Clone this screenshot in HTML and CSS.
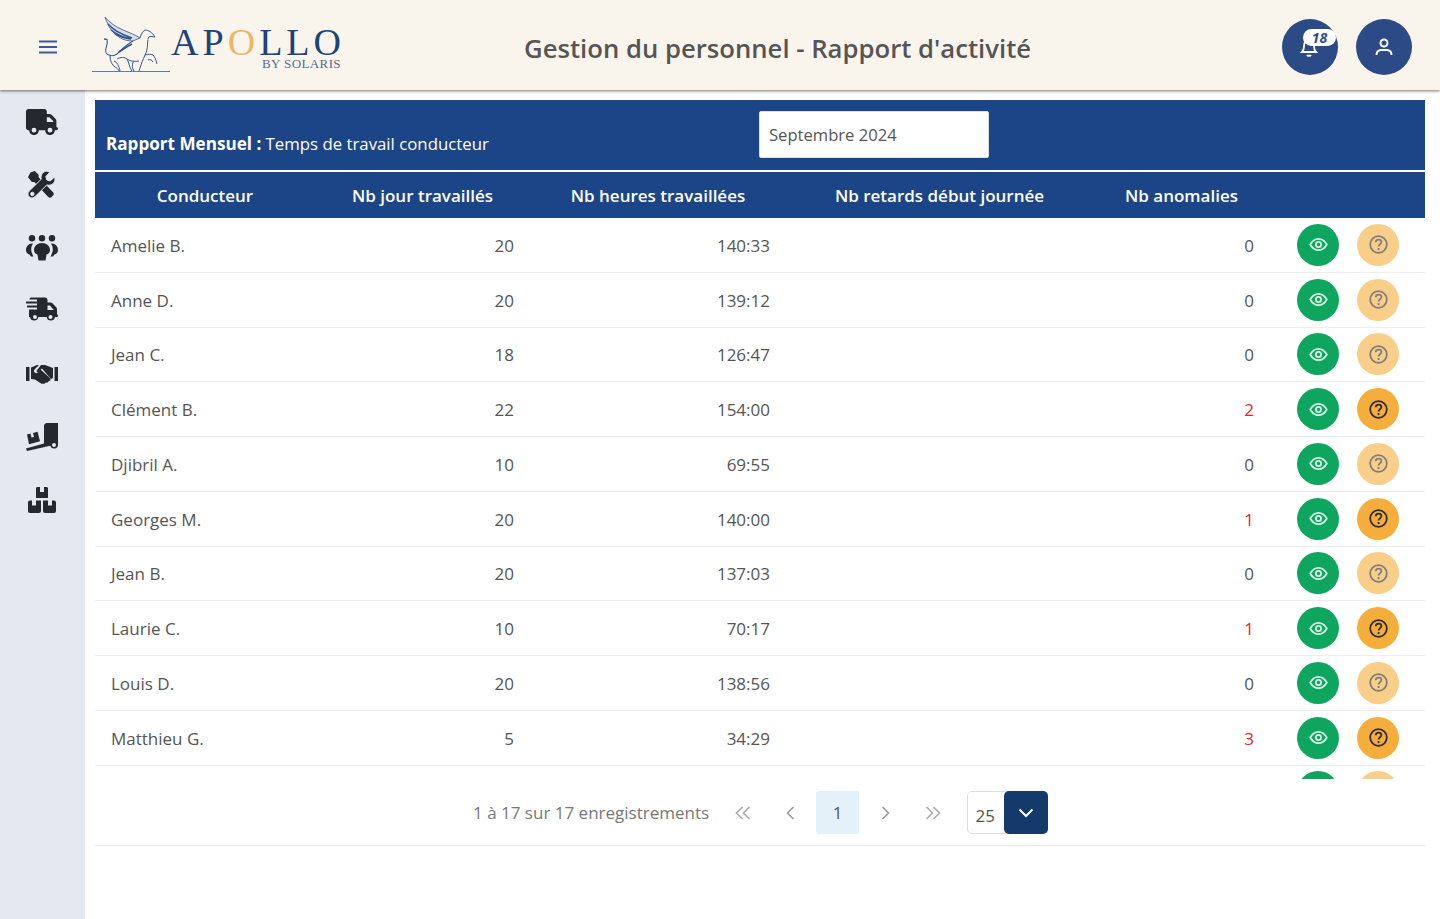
FILE: index.html
```html
<!DOCTYPE html>
<html lang="fr">
<head>
  <meta charset="UTF-8">
  <meta name="viewport" content="width=device-width, initial-scale=1.0">
  <title>Gestion du personnel - Rapport d'activité</title>
  <link rel="stylesheet" href="styles.css">
</head>
<body>
<svg class="sprites" aria-hidden="true">
  <symbol id="i-eye" viewBox="0 0 24 24">
    <path d="M2.500 12C5 7.600 8.200 5.500 12 5.500s7 2.100 9.500 6.500c-2.500 4.400-5.700 6.500-9.500 6.500S5 16.400 2.500 12z" fill="none" stroke="currentColor" stroke-width="2"/>
    <circle cx="12" cy="12" r="3" fill="none" stroke="currentColor" stroke-width="2"/>
  </symbol>
  <symbol id="i-help" viewBox="0 0 24 24">
    <circle cx="12" cy="12" r="9.500" fill="none" stroke="currentColor" stroke-width="2"/>
    <path d="M8.800 9.400c.2-1.900 1.500-2.900 3.300-2.900 1.900 0 3.200 1.100 3.200 2.700 0 2.500-3.200 2.500-3.200 5" fill="none" stroke="currentColor" stroke-width="2"/>
    <circle cx="12.100" cy="17.200" r="1.300" fill="currentColor"/>
  </symbol>
</svg>

<header class="topbar">
  <button class="menu-btn" aria-label="Menu">
    <svg width="18" height="14" viewBox="0 0 18 14"><path d="M0 1.500h18M0 7h18M0 12.500h18" stroke="#3f5c92" stroke-width="2"/></svg>
  </button>
  <div class="logo">
    <svg class="griffin" width="80" height="60" viewBox="0 0 80 60" fill="none" stroke="#35568a" stroke-width="1">
      <path d="M0 56.500h78" stroke-width="1.200" stroke="#5f7ba6"/>
      <path d="M13 2c5 6 11 10 18 13 7 3 13 5 17 8l-7 3c-5 0-10-1-14-4-7-4-11-11-14-20z" fill="#d5dde8" stroke-width=".8"/>
      <path d="M16 9c5 6 12 10 24 14M19 15c5 4 11 7 20 9M23 19c4 2 9 4 15 5" stroke-width="1.400"/>
      <path d="M48 23c1-4 3-7 5-8 3 0 7 2 10 7l-4-.5c-2 0-3 1-3 3"/>
      <path d="M56 25c-1 6 0 9-3 15-2 5-4 9-5 13l-1 3"/>
      <path d="M41 26c-6 3-11 8-16 13-3 2-6 2-8 1-3-1-4-4-3-7 1-3 2-5 1-8" stroke-width="1.100"/>
      <path d="M27 37c4-3 9-6 13-8" stroke-width="1.800"/>
      <path d="M12 24c1 0 3 0 3 1" stroke-width="1.500"/>
      <path d="M53 40c3-1 6-1 8 0 2 2 3 5 4 9"/>
      <path d="M56 45c2-1 4 0 5 2"/>
      <path d="M18 41c0 5 2 9 5 11 2 1 3 2 4 4"/>
      <path d="M25 44c3-2 8-2 10 0 2 3 2 8 5 12"/>
      <path d="M35 44c3 2 7 3 12 2"/>
      <path d="M22 46c3 1 5 5 6 10M41 47c-1 3-1 6 1 9"/>
    </svg>
    <div class="logo-text">
      <div class="logo-name">AP<span class="logo-o">O</span>LLO</div>
      <div class="logo-sub">BY SOLARIS</div>
    </div>
  </div>
  <h1 class="page-title">Gestion du personnel - Rapport d'activité</h1>
  <div class="top-actions">
    <button class="round-btn notif" aria-label="Notifications">
      <svg class="bell" width="24" height="24" viewBox="0 0 24 24" fill="none" stroke="#fff" stroke-width="1.800"><path d="M5 17c1.500-1.500 2-3 2-6 0-3.500 2-6 5-6s5 2.500 5 6c0 3 .5 4.500 2 6zM10 20c.5 1 3.500 1 4 0"/></svg>
      <span class="notif-count">18</span>
    </button>
    <button class="round-btn" aria-label="Profil">
      <svg width="24" height="24" viewBox="0 0 24 24" fill="none" stroke="#fff" stroke-width="2"><circle cx="12" cy="8" r="3.500"/><path d="M4.500 20c0-3.500 2.500-5 5-5h5c2.500 0 5 1.500 5 5"/></svg>
    </button>
  </div>
</header>

<div class="layout">
  <nav class="sidebar">
    <a href="#" class="nav-item"><svg width="32" height="26" viewBox="0 0 640 512" preserveAspectRatio="none"><path d="M48 0C21.500 0 0 21.500 0 48V368c0 26.500 21.500 48 48 48H64c0 53 43 96 96 96s96-43 96-96H384c0 53 43 96 96 96s96-43 96-96h32c17.700 0 32-14.300 32-32s-14.300-32-32-32V288 256 237.300c0-17-6.700-33.300-18.700-45.300L512 114.700c-12-12-28.300-18.700-45.300-18.700H416V48c0-26.500-21.500-48-48-48H48zM416 160h50.700L544 237.300V256H416V160zM112 416a48 48 0 1 1 96 0 48 48 0 1 1 -96 0zm368-48a48 48 0 1 1 0 96 48 48 0 1 1 0-96z"/></svg></a>
    <a href="#" class="nav-item"><svg width="27" height="27" viewBox="0 0 28 28"><path d="M2.500 1.500 7 0l4 4v2.500l15 15.500c1 1 1 2.500 0 3.500l-1.500 1.500c-1 1-2.500 1-3.500 0L6.500 11.500H4L0 6.500z"/><path d="M20 0c-3.500 0-6.500 3-6.500 6.500 0 .8.100 1.400.3 2L1.500 20.500c-2 2-2 4.500-.3 6.200s4.300 1.700 6.200-.2L19.500 14.500c.6.200 1.300.3 2 .3 3.500 0 6.500-3 6.500-6.500l-.5-2-4.500 4-3.500-1-1-3.500 4-4.500c-.7-.4-1.500-.8-2.500-.8zM4.500 22a1.800 1.800 0 1 1 0 3.600 1.800 1.800 0 0 1 0-3.600z" stroke="#e4e8f0" stroke-width="1"/></svg></a>
    <a href="#" class="nav-item"><svg width="32" height="26" viewBox="0 0 32 26"><circle cx="6" cy="3.200" r="3.200"/><circle cx="16" cy="3.200" r="3.200"/><circle cx="26" cy="3.200" r="3.200"/><path d="M6 8.500C2.500 8.500 0 11.500 0 15c0 2.500 1.500 4 3.500 4.500l1.500 2h2.500C6 19 5.200 16.500 5.200 14.500c0-2.200.6-4.200 1.800-6zM26 8.500c3.500 0 6 3 6 6.500 0 2.500-1.500 4-3.500 4.500l-1.500 2h-2.500c1.500-2.500 2.300-5 2.300-7 0-2.200-.6-4.200-1.800-6zM16 8c-4.500 0-8 3-8 7 0 2.500 1.500 4 3.500 4.500l1 6h7l1-6c2-.5 3.500-2 3.500-4.500 0-4-3.500-7-8-7z"/></svg></a>
    <a href="#" class="nav-item"><svg width="32" height="27" viewBox="0 0 32 26"><path d="M5 0h14c1.400 0 2.500 1 2.500 2.500V5h3c.8 0 1.600.3 2.200.9l3.300 3.600c.6.600 1 1.400 1 2.200V17c.8 0 1 .6 1 1.200 0 .8-.5 1.300-1 1.300h-2a4.200 4.200 0 0 1-8.300 0h-8.400a4.200 4.200 0 0 1-8.300 0H3V12h8V10H1V8h10V6H0V4h11V2H3.500C3.500 1 4 0 5 0zM21.500 8v4.500h6.200L24 8zM9 17.500a2 2 0 1 0 0 4 2 2 0 0 0 0-4zm15.500 0a2 2 0 1 0 0 4 2 2 0 0 0 0-4z" fill-rule="evenodd"/></svg></a>
    <a href="#" class="nav-item"><svg width="32" height="20" viewBox="0 0 32 20"><path d="M0 3h3.500v14H0zM28.500 3H32v14h-3.500z"/><path d="M5 3.500 11 1h2L8.500 5.500c-1 1.200-.5 3 1 3.500 1.200.4 2.300 0 3-1l2-2.500L24 14c.8.800.8 2 0 2.700l-1 .3-1.500 1.500-2 .2-1 1h-3L9 15.500 5 15z"/><path d="M15 1h4l8 3v10l-2 1-9-10.500-3.500 3.500c-.6.600-1.500.4-1.800-.2-.2-.4-.2-.8.100-1.200z"/></svg></a>
    <a href="#" class="nav-item"><svg width="32" height="28" viewBox="0 0 32 28"><path d="M18 3c0-1.500 1-3 3-3h11v21.500a4 4 0 0 1-7.800 1.300L1 28l-1-2.600 18-5zM28 20a2 2 0 1 0 0 4 2 2 0 0 0 0-4z" fill-rule="evenodd"/><path d="M1 11.500 4.500 10.600l1 4 2.500-.6-1-4 4.500-1.200 2.500 9.500-11 3z"/></svg></a>
    <a href="#" class="nav-item"><svg width="28" height="26" viewBox="0 0 28 26"><path d="M8 1.500C8 .7 8.700 0 9.500 0H12v5h4V0h2.500c.8 0 1.500.7 1.500 1.500V11H8zM0 15.500c0-1 .7-2 2-2h2v5h4v-5h5V24c0 1-.7 2-2 2H2c-1.300 0-2-1-2-2zM15 13.500h5v5h4v-5h2c1.300 0 2 1 2 2V24c0 1-.7 2-2 2H17c-1.300 0-2-1-2-2z"/></svg></a>
  </nav>

  <main class="content">
    <div class="report-bar">
      <div class="report-title"><strong>Rapport Mensuel :</strong> Temps de travail conducteur</div>
      <input class="month-input" type="text" value="Septembre 2024">
    </div>

    <div class="grid-row grid-head">
      <div>Conducteur</div>
      <div>Nb jour travaillés</div>
      <div>Nb heures travaillées</div>
      <div>Nb retards début journée</div>
      <div>Nb anomalies</div>
      <div></div>
    </div>

    <div class="grid-body">
      <div class="grid-row item">
        <div class="c-name">Amelie B.</div><div class="c-num">20</div><div class="c-num">140:33</div><div></div><div class="c-num">0</div>
        <div class="c-actions"><button class="act act-view"><svg><use href="#i-eye"/></svg></button><button class="act act-help off"><svg><use href="#i-help"/></svg></button></div>
      </div>
      <div class="grid-row item">
        <div class="c-name">Anne D.</div><div class="c-num">20</div><div class="c-num">139:12</div><div></div><div class="c-num">0</div>
        <div class="c-actions"><button class="act act-view"><svg><use href="#i-eye"/></svg></button><button class="act act-help off"><svg><use href="#i-help"/></svg></button></div>
      </div>
      <div class="grid-row item">
        <div class="c-name">Jean C.</div><div class="c-num">18</div><div class="c-num">126:47</div><div></div><div class="c-num">0</div>
        <div class="c-actions"><button class="act act-view"><svg><use href="#i-eye"/></svg></button><button class="act act-help off"><svg><use href="#i-help"/></svg></button></div>
      </div>
      <div class="grid-row item">
        <div class="c-name">Clément B.</div><div class="c-num">22</div><div class="c-num">154:00</div><div></div><div class="c-num red">2</div>
        <div class="c-actions"><button class="act act-view"><svg><use href="#i-eye"/></svg></button><button class="act act-help"><svg><use href="#i-help"/></svg></button></div>
      </div>
      <div class="grid-row item">
        <div class="c-name">Djibril A.</div><div class="c-num">10</div><div class="c-num">69:55</div><div></div><div class="c-num">0</div>
        <div class="c-actions"><button class="act act-view"><svg><use href="#i-eye"/></svg></button><button class="act act-help off"><svg><use href="#i-help"/></svg></button></div>
      </div>
      <div class="grid-row item">
        <div class="c-name">Georges M.</div><div class="c-num">20</div><div class="c-num">140:00</div><div></div><div class="c-num red">1</div>
        <div class="c-actions"><button class="act act-view"><svg><use href="#i-eye"/></svg></button><button class="act act-help"><svg><use href="#i-help"/></svg></button></div>
      </div>
      <div class="grid-row item">
        <div class="c-name">Jean B.</div><div class="c-num">20</div><div class="c-num">137:03</div><div></div><div class="c-num">0</div>
        <div class="c-actions"><button class="act act-view"><svg><use href="#i-eye"/></svg></button><button class="act act-help off"><svg><use href="#i-help"/></svg></button></div>
      </div>
      <div class="grid-row item">
        <div class="c-name">Laurie C.</div><div class="c-num">10</div><div class="c-num">70:17</div><div></div><div class="c-num red">1</div>
        <div class="c-actions"><button class="act act-view"><svg><use href="#i-eye"/></svg></button><button class="act act-help"><svg><use href="#i-help"/></svg></button></div>
      </div>
      <div class="grid-row item">
        <div class="c-name">Louis D.</div><div class="c-num">20</div><div class="c-num">138:56</div><div></div><div class="c-num">0</div>
        <div class="c-actions"><button class="act act-view"><svg><use href="#i-eye"/></svg></button><button class="act act-help off"><svg><use href="#i-help"/></svg></button></div>
      </div>
      <div class="grid-row item">
        <div class="c-name">Matthieu G.</div><div class="c-num">5</div><div class="c-num">34:29</div><div></div><div class="c-num red">3</div>
        <div class="c-actions"><button class="act act-view"><svg><use href="#i-eye"/></svg></button><button class="act act-help"><svg><use href="#i-help"/></svg></button></div>
      </div>
      <div class="grid-row item">
        <div class="c-name"></div><div class="c-num"></div><div class="c-num"></div><div></div><div class="c-num"></div>
        <div class="c-actions"><button class="act act-view"></button><button class="act act-help off"></button></div>
      </div>
    </div>

    <div class="pager">
      <span class="pager-info">1 à 17 sur 17 enregistrements</span>
      <button class="page-link"><svg width="16" height="14" viewBox="0 0 16 14"><path d="M7.500 1 1.500 7l6 6M14.500 1l-6 6 6 6" fill="none" stroke="#a9a9a9" stroke-width="1.600"/></svg></button>
      <button class="page-link"><svg width="9" height="14" viewBox="0 0 9 14"><path d="M7.500 1 1.500 7l6 6" fill="none" stroke="#999" stroke-width="1.600"/></svg></button>
      <button class="page-link current">1</button>
      <button class="page-link"><svg width="9" height="14" viewBox="0 0 9 14"><path d="m1.500 1 6 6-6 6" fill="none" stroke="#999" stroke-width="1.600"/></svg></button>
      <button class="page-link"><svg width="16" height="14" viewBox="0 0 16 14"><path d="m1.500 1 6 6-6 6M8.500 1l6 6-6 6" fill="none" stroke="#a9a9a9" stroke-width="1.600"/></svg></button>
      <div class="page-size">
        <span class="page-size-val">25</span>
        <span class="page-size-btn"><svg width="16" height="10" viewBox="0 0 16 10"><path d="m1.500 1.500 6.500 6.500 6.500-6.500" fill="none" stroke="#fff" stroke-width="2"/></svg></span>
      </div>
    </div>
  </main>
</div>
</body>
</html>
```

FILE: styles.css
```css
* {
  box-sizing: border-box;
}

body {
  margin: 0;
  height: 919px;
  overflow: hidden;
  font-family: "Open Sans", "Noto Sans", sans-serif;
  background-color: #fff;
  color: #555;
}

button {
  font-family: inherit;
  border: none;
  background: none;
  padding: 0;
}

.sprites {
  display: none;
}

/* top bar */
.topbar {
  height: 90px;
  display: flex;
  align-items: center;
  background-color: #f9f5ec;
  box-shadow: 0 1px 3px rgba(0, 0, 0, 0.55);
  position: relative;
  z-index: 2;
}

.menu-btn {
  display: flex;
  margin-left: 39px;
  margin-top: 4px;
}

.logo {
  display: flex;
  align-items: flex-start;
  margin-left: 35px;
  margin-top: -1px;
  height: 60px;
}

.griffin {
  display: block;
  flex-shrink: 0;
}

.logo-text {
  margin-left: -1px;
  margin-top: 12px;
  font-family: "Liberation Serif", serif;
  color: #1d4478;
  width: 170px;
  text-align: right;
}

.logo-name {
  font-size: 38px;
  line-height: 30px;
  letter-spacing: 4px;
  margin-right: -4px;
  white-space: nowrap;
}

.logo-o {
  color: #e9b765;
}

.logo-sub {
  font-size: 13px;
  line-height: 13px;
  color: #5a6b8c;
  letter-spacing: 0.4px;
}

.page-title {
  margin: 6px 0 0 183px;
  font-size: 25.7px;
  font-weight: 600;
  color: #555;
  white-space: nowrap;
}

.top-actions {
  display: flex;
  gap: 18px;
  margin-left: auto;
  margin-right: 28px;
  margin-top: 4px;
}

.round-btn {
  width: 56px;
  height: 56px;
  border-radius: 50%;
  background-color: #2c4a85;
  display: flex;
  align-items: center;
  justify-content: center;
  position: relative;
}

.bell {
  margin-left: -3px;
}

.notif-count {
  position: absolute;
  top: 10px;
  left: 21px;
  width: 33px;
  height: 17px;
  border-radius: 9px;
  background-color: #fff;
  color: #2c4a85;
  font-size: 14px;
  line-height: 17px;
  font-weight: 700;
  font-style: italic;
  text-align: center;
}

/* page body */
.layout {
  display: flex;
  height: 829px;
}

.sidebar {
  width: 85px;
  flex-shrink: 0;
  background-color: #e4e8f0;
  display: flex;
  flex-direction: column;
  align-items: center;
  padding-right: 2px;
}

.nav-item {
  height: 63px;
  width: 100%;
  display: flex;
  align-items: center;
  justify-content: center;
  flex-shrink: 0;
  fill: #25282f;
}

.content {
  flex: 1;
  padding: 10px 15px 0 10px;
  min-width: 0;
}

.report-bar {
  height: 70px;
  background-color: #1c4587;
  color: #fff;
  display: flex;
  align-items: flex-start;
  font-size: 16.8px;
}

.report-title {
  width: 664px;
  padding: 31px 0 0 11px;
  line-height: 25px;
  white-space: nowrap;
}

.report-title strong {
  font-size: 17.1px;
  font-weight: 700;
}

.month-input {
  width: 230px;
  height: 47px;
  margin-top: 11px;
  padding: 0 9px;
  border: 1px solid #ddd;
  border-radius: 2px;
  font-family: inherit;
  font-size: 16.6px;
  color: #555;
}

/* table */
.grid-row {
  display: grid;
  grid-template-columns: 220px 215px 256px 307px 177px 155px;
  align-items: center;
}

.grid-head {
  height: 46px;
  margin-top: 2px;
  background-color: #1c4587;
  color: #fff;
  font-size: 17px;
  font-weight: 600;
  text-align: center;
  white-space: nowrap;
}

.grid-body {
  height: 561px;
  overflow: hidden;
}

.item {
  height: 54.75px;
  border-bottom: 1px solid #eeeeee;
  font-size: 17px;
  color: #555;
}

.c-name {
  padding-left: 16px;
  padding-top: 1px;
}

.c-num {
  text-align: right;
  padding-right: 16px;
  padding-top: 1px;
}

.red {
  color: #ee1c25;
}

.c-actions {
  display: flex;
  gap: 18px;
  padding-left: 27px;
}

.act {
  width: 42px;
  height: 42px;
  border-radius: 50%;
  display: flex;
  align-items: center;
  justify-content: center;
}

.act svg {
  width: 21px;
  height: 21px;
}

.act-view {
  background-color: #0ea65f;
  color: #d9f3e5;
}

.act-help {
  background-color: #f5ae3c;
  color: #2d2a22;
}

.act-help.off {
  opacity: 0.6;
}

/* pagination */
.pager {
  height: 67px;
  padding-top: 1px;
  border-bottom: 1px solid #e8e8e8;
  display: flex;
  align-items: center;
  padding-left: 378px;
  font-size: 17px;
  color: #777;
}

.pager-info {
  width: 248px;
  white-space: nowrap;
}

.page-link {
  width: 43px;
  height: 43px;
  margin-right: 4.5px;
  display: flex;
  align-items: center;
  justify-content: center;
  border-radius: 3px;
  color: #555;
  font-size: 17px;
}

.page-link.current {
  background-color: #e3f1fb;
}

.page-size {
  width: 81px;
  height: 43px;
  margin-left: 8px;
  border: 1px solid #ddd;
  border-radius: 5px;
  display: flex;
  justify-content: space-between;
  color: #555;
}

.page-size-val {
  padding: 9px 0 0 8px;
  line-height: 30px;
}

.page-size-btn {
  width: 44px;
  height: 43px;
  margin: -1px;
  background-color: #133a6b;
  border-radius: 5px;
  display: flex;
  align-items: center;
  justify-content: center;
}
```
